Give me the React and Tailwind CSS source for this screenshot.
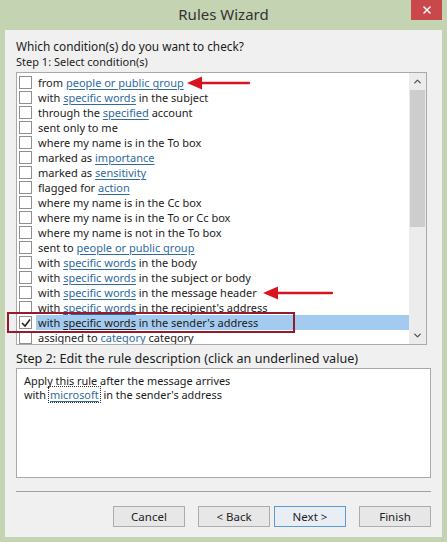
import { ChevronUp, ChevronDown, X } from "lucide-react";

const font = { fontFamily: '"Noto Sans", "Open Sans", sans-serif' };

function Link({ children }) {
  return <span className="text-[#2f6aa0] underline underline-offset-2">{children}</span>;
}

const conditions = [
  <>from <Link>people or public group</Link></>,
  <>with <Link>specific words</Link> in the subject</>,
  <>through the <Link>specified</Link> account</>,
  <>sent only to me</>,
  <>where my name is in the To box</>,
  <>marked as <Link>importance</Link></>,
  <>marked as <Link>sensitivity</Link></>,
  <>flagged for <Link>action</Link></>,
  <>where my name is in the Cc box</>,
  <>where my name is in the To or Cc box</>,
  <>where my name is not in the To box</>,
  <>sent to <Link>people or public group</Link></>,
  <>with <Link>specific words</Link> in the body</>,
  <>with <Link>specific words</Link> in the subject or body</>,
  <>with <Link>specific words</Link> in the message header</>,
  <>with <Link>specific words</Link> in the recipient's address</>,
  <>with <span className="underline underline-offset-2">specific words</span> in the sender's address</>,
  <>assigned to <Link>category</Link> category</>,
];

function Checkbox({ checked }) {
  return (
    <span className="grid h-[13px] w-[13px] shrink-0 place-items-center border border-[#8f8f8f] bg-white">
      {checked && (
        <svg width="10" height="10" viewBox="0 0 10 10">
          <path d="M1 5 L4 8 L9 1.5" fill="none" stroke="#222" strokeWidth="1.6" />
        </svg>
      )}
    </span>
  );
}

function RedArrow({ className, width }) {
  return (
    <svg className={className} width={width} height="14" viewBox={`0 0 ${width} 14`}>
      <polygon points="0,7 15,0.5 15,13.5" fill="#d8151f" />
      <line x1="12" y1="7" x2={width - 1} y2="7" stroke="#d8151f" strokeWidth="2.5" strokeLinecap="round" />
    </svg>
  );
}

function Button({ children, focused, className = "" }) {
  return (
    <button
      className={
        "h-[21px] w-[72px] border text-[11.5px] leading-none text-[#222] " +
        (focused ? "border-[#5b9bd5] bg-[#e9eef4] " : "border-[#acacac] bg-[#e7e7e7] ") +
        className
      }
    >
      {children}
    </button>
  );
}

export default function App() {
  return (
    <div className="flex h-[542px] w-[447px] flex-col bg-[#c4d4b2] text-[#1b1b1b]" style={font}>
      {/* title bar */}
      <div className="relative flex h-[30px] shrink-0 items-center justify-center pb-[1px]">
        <span className="text-[15px] text-[#333]">Rules Wizard</span>
        <span className="absolute right-[5px] top-0 grid h-[20px] w-[31px] place-items-center bg-[#c8484b] text-white">
          <X size={12} strokeWidth={3} />
        </span>
      </div>

      {/* client area */}
      <div className="relative mx-[5px] h-[507px] bg-[#f0f0f0] pl-[11px] pt-[8px]">
        <p className="text-[11.8px] leading-4">Which condition(s) do you want to check?</p>
        <p className="text-[11px] leading-4">Step 1: Select condition(s)</p>

        <div className="mt-[2px] flex h-[273px] w-[411px] border border-[#a9a9a9] bg-white text-[11px]">
          <div className="relative flex-1 overflow-hidden pt-[2px]">
            {conditions.map((c, i) => {
              const selected = i === 16;
              return (
                <div key={i} className="flex h-[15px] items-center gap-[4px] pl-[2px] leading-none">
                  <Checkbox checked={selected} />
                  <span className={"h-[15px] flex-1 whitespace-nowrap pl-[2px] leading-[15px] " + (selected ? "bg-[#a3cbef]" : "")}>
                    {c}
                  </span>
                </div>
              );
            })}
            <RedArrow className="absolute left-[170px] top-[3px]" width={63} />
            <RedArrow className="absolute left-[246px] top-[213px]" width={70} />
          </div>
          {/* scrollbar */}
          <div className="flex w-[17px] shrink-0 flex-col bg-[#ececec]">
            <div className="grid h-[17px] place-items-center text-[#555]">
              <ChevronUp size={11} strokeWidth={3} />
            </div>
            <div className="mx-[1px] h-[137px] bg-[#cdcdcd]" />
            <div className="flex-1" />
            <div className="grid h-[17px] place-items-center text-[#555]">
              <ChevronDown size={11} strokeWidth={3} />
            </div>
          </div>
        </div>

        {/* selection callout */}
        <div className="absolute left-[2px] top-[282px] h-[21px] w-[288px] border-2 border-[#951b2c]" />

        <p className="mt-[6px] text-[12.6px] leading-4">Step 2: Edit the rule description (click an underlined value)</p>
        <div className="mt-[1px] h-[110px] w-[415px] border border-[#a9a9a9] bg-white px-[7px] pt-[5px] text-[10.9px] leading-[14px]">
          <p>Apply this rule after the message arrives</p>
          <p>
            with
            <span className="ml-[2px] border border-dotted border-[#333] px-px text-[#2f6aa0] underline underline-offset-2">microsoft</span>
            {" "}in the sender's address
          </p>
        </div>

        <div className="mt-[13px] h-px w-[415px] bg-[#a0a0a0]" />

        <div className="mt-[14px] flex w-[415px] items-start justify-end">
          <Button>Cancel</Button>
          <Button className="ml-[13px]">&lt; Back</Button>
          <Button focused className="ml-[4px]">Next &gt;</Button>
          <Button className="ml-[13px]">Finish</Button>
        </div>
      </div>
    </div>
  );
}
